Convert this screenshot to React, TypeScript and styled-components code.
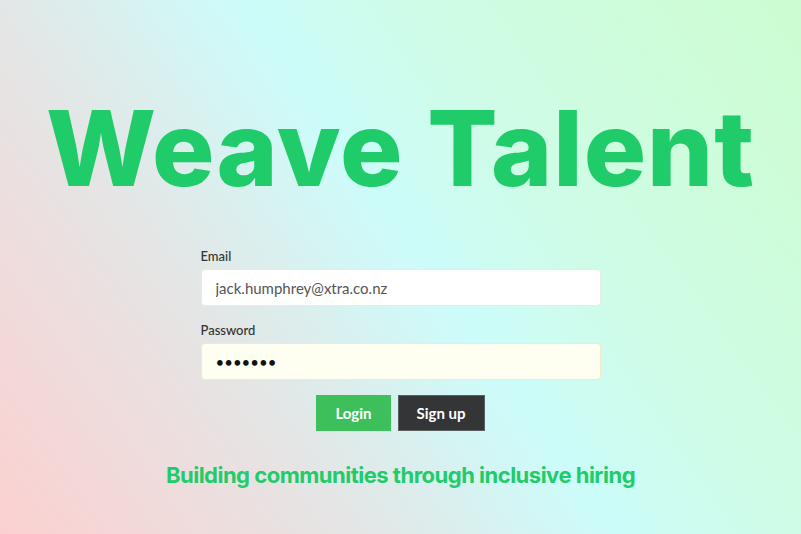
import * as React from 'react';
import styled, {createGlobalStyle} from "styled-components";

const GlobalStyle = createGlobalStyle`
  html, body {
    margin: 0;
    padding: 0;
    height: 100%;
  }
  #root {
    height: 100%;
  }
`

const Page = styled.div`
  box-sizing: border-box;
  height: 534px;
  display: flex;
  flex-direction: column;
  align-items: center;
  padding-top: 88px;
  background: linear-gradient(55deg, #fcd0d0 0%, #e5e5e5 30%, #ccfcfa 52%, #cffce6 68%, #ccfdd0 100%);
  overflow: hidden;
`

const Title = styled.h1`
  margin: 0;
  font-family: Inter, "Liberation Sans", sans-serif;
  font-weight: 800;
  font-size: 104px;
  line-height: 120px;
  letter-spacing: 1px;
  color: #20cc6a;
`

const Form = styled.form`
  width: 400px;
  margin-top: 40px;
  display: flex;
  flex-direction: column;
`

const Label = styled.label`
  font-family: Lato, "Liberation Sans", sans-serif;
  font-size: 13px;
  font-weight: 500;
  color: #333;
  margin-bottom: 5px;
`

const Input = styled.input<{ $filled?: boolean }>`
  box-sizing: border-box;
  width: 100%;
  height: 37px;
  padding: 0 14px;
  margin-bottom: 16px;
  border: 1px solid ${p => p.$filled ? '#f1ecc6' : '#e3ebeb'};
  border-radius: 4px;
  background: ${p => p.$filled ? '#fefff0' : '#ffffff'};
  font-family: Lato, "Liberation Sans", sans-serif;
  font-size: 15px;
  color: ${p => p.$filled ? '#111' : '#555'};
  outline: none;
`

const Buttons = styled.div`
  display: flex;
  justify-content: center;
  gap: 7px;
  margin-top: -1px;
`

const Button = styled.button<{ $dark?: boolean }>`
  height: 36px;
  padding: 0 18px;
  border: 1px solid ${p => p.$dark ? '#5a6060' : '#3dbf5c'};
  border-radius: 0;
  background: ${p => p.$dark ? '#333537' : '#3dbf5c'};
  color: #fff;
  font-family: Lato, "Liberation Sans", sans-serif;
  font-weight: 700;
  font-size: 15px;
  cursor: pointer;
`

const Tagline = styled.p`
  margin: 31px 0 0;
  font-family: Inter, "Liberation Sans", sans-serif;
  font-weight: 700;
  font-size: 22px;
  letter-spacing: -0.5px;
  color: #20cc6a;
`

export default function App() {
    return (
        <Page>
            <GlobalStyle/>
            <Title>Weave Talent</Title>
            <Form onSubmit={e => e.preventDefault()}>
                <Label>Email</Label>
                <Input type="email" defaultValue="jack.humphrey@xtra.co.nz"/>
                <Label>Password</Label>
                <Input $filled type="password" defaultValue="1234567"/>
                <Buttons>
                    <Button type="submit">Login</Button>
                    <Button $dark type="button">Sign up</Button>
                </Buttons>
            </Form>
            <Tagline>Building communities through inclusive hiring</Tagline>
        </Page>
    );
}
